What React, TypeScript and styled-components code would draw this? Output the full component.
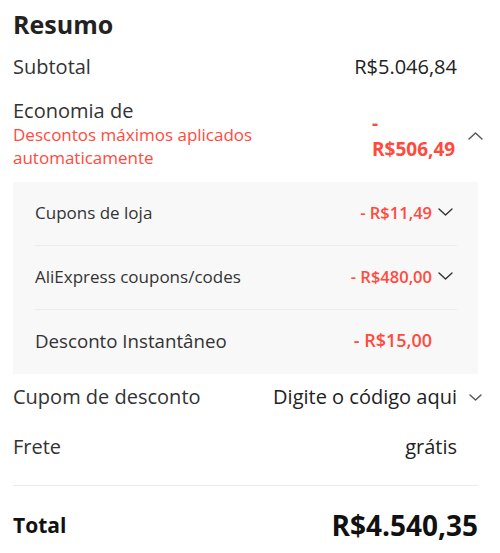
import React from "react";
import styled, { createGlobalStyle } from "styled-components";

const Global = createGlobalStyle`
  html, body { margin: 0; padding: 0; background: #fff; }
  body { font-family: "Open Sans", "Noto Sans", Arial, sans-serif; color: #222; }
`;

const Wrap = styled.div`
  width: 465px;
  padding: 8px 22px 0 13px;
`;

const Title = styled.h2`
  margin: 0;
  font-size: 25px;
  line-height: 32px;
  font-weight: 700;
  color: #222;
`;

const Row = styled.div<{ $mt: number }>`
  display: flex;
  justify-content: space-between;
  align-items: flex-start;
  margin-top: ${(p) => p.$mt}px;
`;

const Label = styled.div`
  font-size: 20px;
  line-height: 26px;
  color: #333;
`;

const LabelBlock = styled.div`
  display: flex;
  flex-direction: column;
`;

const LabelTight = styled(Label)`
  line-height: 25px;
`;

const Note = styled.div`
  font-size: 17px;
  line-height: 23px;
  color: #ff4a3d;
`;

const Right = styled.div<{ $mt?: number }>`
  display: flex;
  align-items: center;
  margin-top: ${(p) => p.$mt ?? 0}px;
`;

const Value = styled.div`
  font-size: 20px;
  line-height: 26px;
  color: #222;
  text-align: right;
`;

const Saving = styled.div`
  width: 86px;
  font-size: 19px;
  line-height: 26px;
  font-weight: 700;
  color: #ff4a3d;
`;

const ChevSlot = styled.div<{ $w: number; $ml: number }>`
  width: ${(p) => p.$w}px;
  display: flex;
  justify-content: flex-start;
  overflow: visible;
  svg {
    margin-left: ${(p) => p.$ml}px;
    flex: none;
    display: block;
  }
`;

const Panel = styled.div`
  margin-top: 13px;
  background: #f8f8f8;
  padding: 0 21px 0 22px;
`;

const SubRow = styled.div<{ $last?: boolean }>`
  height: 64px;
  padding-bottom: 3px;
  display: flex;
  align-items: center;
  justify-content: space-between;
  border-bottom: 1px solid ${(p) => (p.$last ? "transparent" : "#ececec")};
  box-sizing: border-box;
`;

const SubLabel = styled.div<{ $large?: boolean }>`
  font-size: ${(p) => (p.$large ? 18.7 : 17)}px;
  line-height: 23px;
  color: #333;
`;

const SubValue = styled.div<{ $large?: boolean }>`
  font-size: ${(p) => (p.$large ? 18 : 16.5)}px;
  line-height: 23px;
  font-weight: 600;
  color: #ff4a3d;
`;

const Divider = styled.div`
  height: 1px;
  background: #ebebeb;
  margin-top: 25px;
`;

const TotalRow = styled.div`
  display: flex;
  justify-content: space-between;
  align-items: center;
  height: 36px;
  margin-top: 21px;
`;

const TotalLabel = styled.div`
  font-size: 21px;
  font-weight: 700;
  color: #111;
`;

const TotalValue = styled.div`
  font-size: 28px;
  font-weight: 700;
  color: #111;
  line-height: 36px;
`;

const Chevron = ({ up, w, h, color }: { up?: boolean; w: number; h: number; color: string }) => (
  <svg width={w} height={h} viewBox={`0 0 ${w} ${h}`} fill="none">
    <polyline
      points={
        up
          ? `1,${h - 1} ${w / 2},1 ${w - 1},${h - 1}`
          : `1,1 ${w / 2},${h - 1} ${w - 1},1`
      }
      stroke={color}
      strokeWidth={1.4}
      strokeLinecap="round"
      strokeLinejoin="round"
    />
  </svg>
);

const subs = [
  { label: "Cupons de loja", value: "- R$11,49", chevron: true, large: false },
  { label: "AliExpress coupons/codes", value: "- R$480,00", chevron: true, large: false },
  { label: "Desconto Instantâneo", value: "- R$15,00", chevron: false, large: true },
];

export default function App() {
  return (
    <>
      <Global />
      <Wrap>
        <Title>Resumo</Title>
        <Row $mt={14}>
          <Label>Subtotal</Label>
          <Right>
            <Value>R$5.046,84</Value>
            <ChevSlot $w={21} $ml={11} />
          </Right>
        </Row>
        <Row $mt={18}>
          <LabelBlock>
            <LabelTight>Economia de</LabelTight>
            <Note>
              Descontos máximos aplicados
              <br />
              automaticamente
            </Note>
          </LabelBlock>
          <Right $mt={12}>
            <Saving>- R$506,49</Saving>
            <ChevSlot $w={20} $ml={10}>
              <Chevron up w={15} h={8} color="#555" />
            </ChevSlot>
          </Right>
        </Row>
        <Panel>
          {subs.map((s, i) => (
            <SubRow key={s.label} $last={i === subs.length - 1}>
              <SubLabel $large={s.large}>{s.label}</SubLabel>
              <Right>
                <SubValue $large={s.large}>{s.value}</SubValue>
                <ChevSlot $w={25} $ml={6}>
                  {s.chevron && <Chevron w={15} h={8} color="#333" />}
                </ChevSlot>
              </Right>
            </SubRow>
          ))}
        </Panel>
        <Row $mt={10}>
          <Label>Cupom de desconto</Label>
          <Right>
            <Value>Digite o código aqui</Value>
            <ChevSlot $w={21} $ml={12}>
              <Chevron w={13} h={7} color="#555" />
            </ChevSlot>
          </Right>
        </Row>
        <Row $mt={24}>
          <Label>Frete</Label>
          <Right>
            <Value>grátis</Value>
            <ChevSlot $w={21} $ml={11} />
          </Right>
        </Row>
        <Divider />
        <TotalRow>
          <TotalLabel>Total</TotalLabel>
          <TotalValue>R$4.540,35</TotalValue>
        </TotalRow>
      </Wrap>
    </>
  );
}
